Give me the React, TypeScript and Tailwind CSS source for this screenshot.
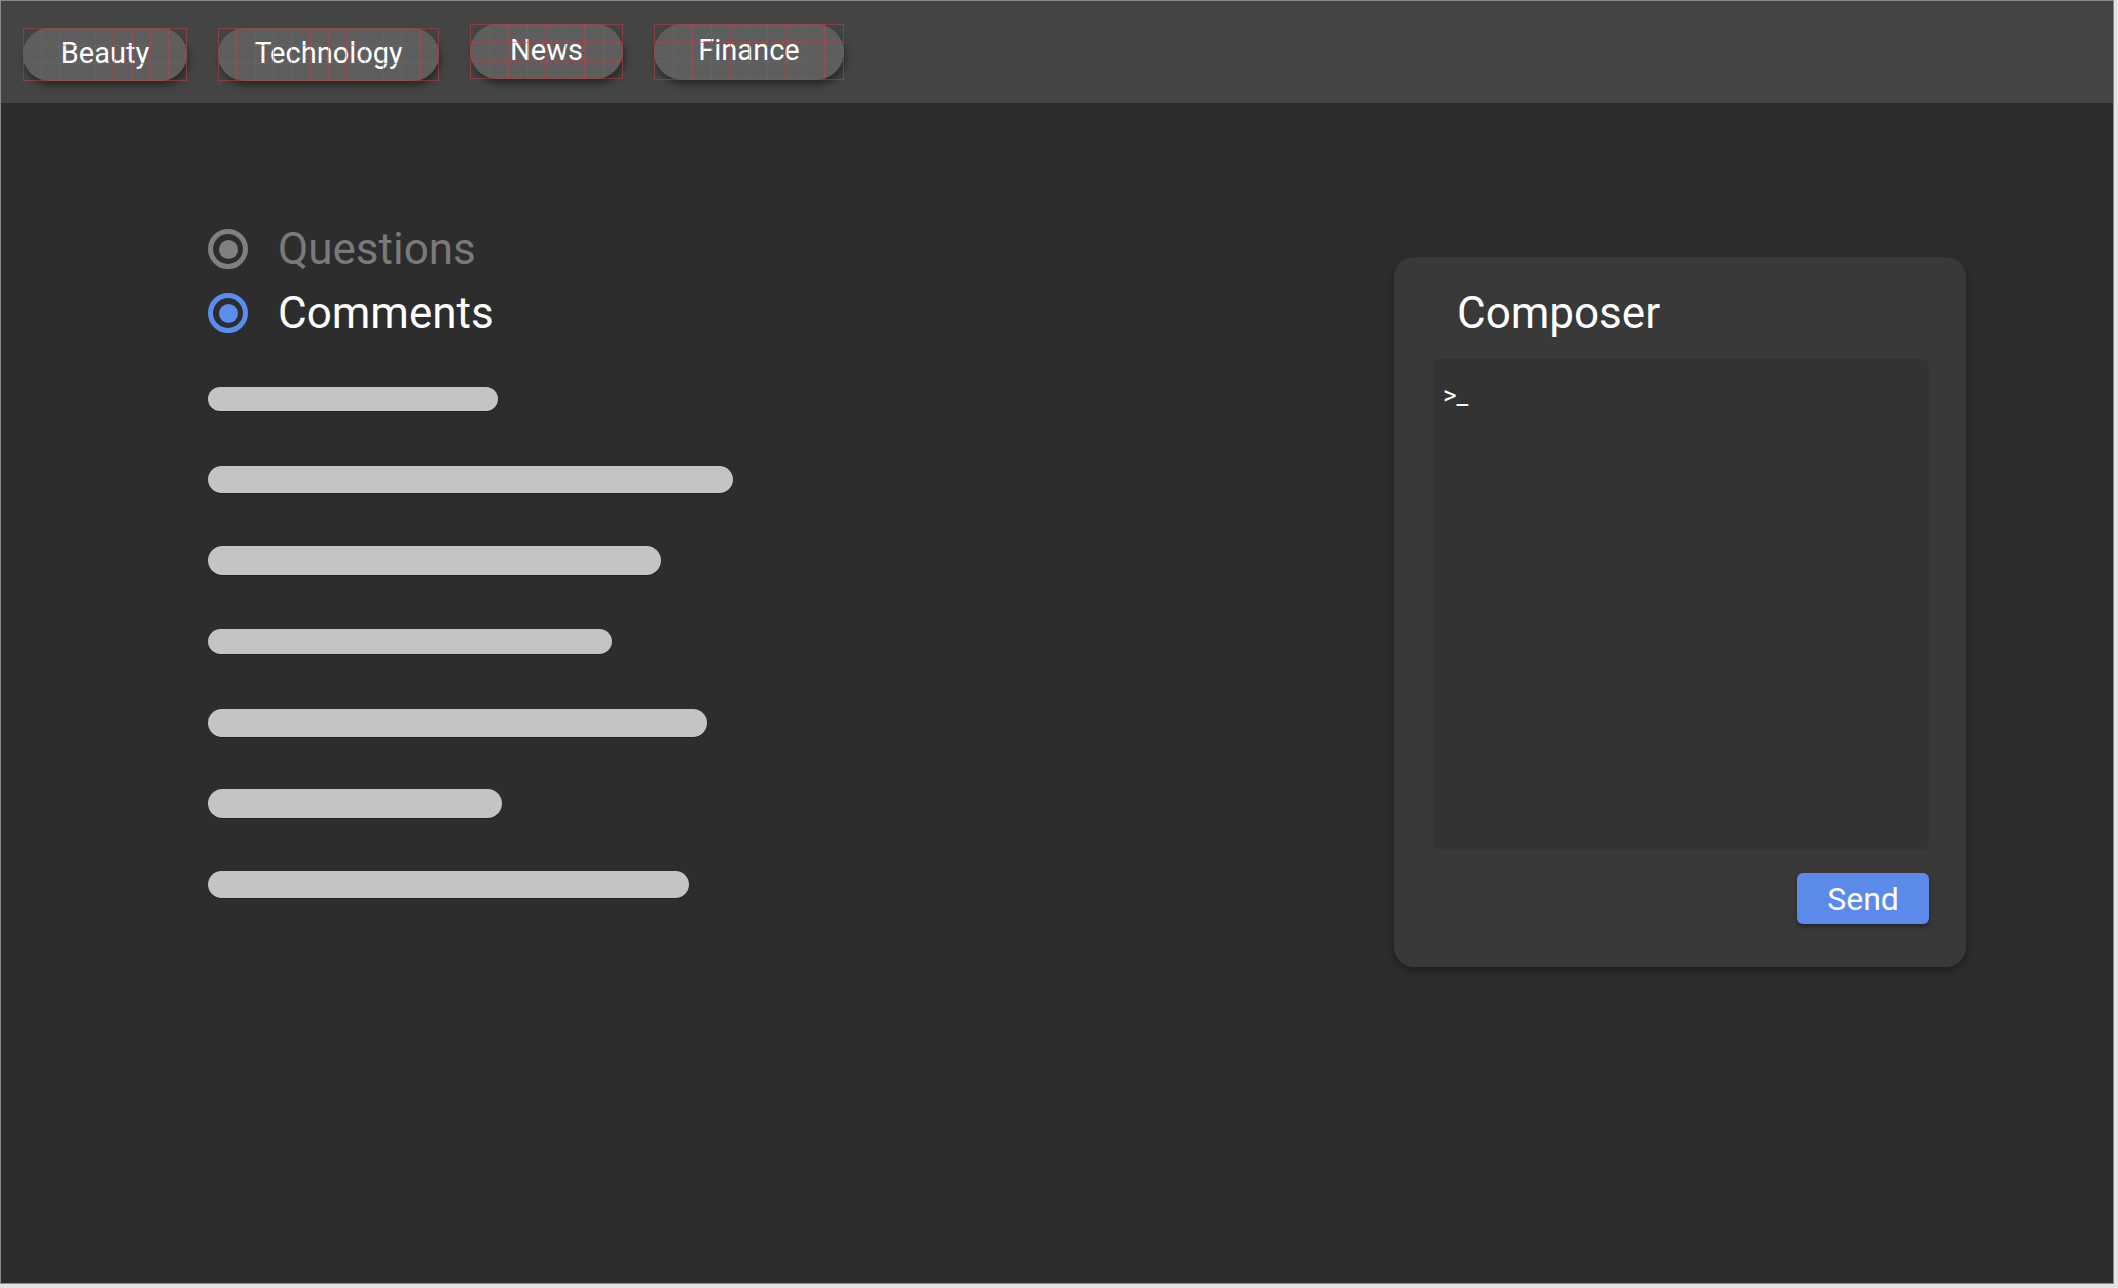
const chips = [
  { label: "Beauty", w: "w-[164px]", h: "h-[53px]", mt: "mt-[27px]", cols: 9 },
  { label: "Technology", w: "w-[221px]", h: "h-[53px]", mt: "mt-[27px]", cols: 12 },
  { label: "News", w: "w-[153px]", h: "h-[55px]", mt: "mt-[23px]", cols: 8 },
  { label: "Finance", w: "w-[190px]", h: "h-[56px]", mt: "mt-[23px]", cols: 10 },
];

const bars = [
  { w: "w-[290px]", h: "h-[24px]" },
  { w: "w-[525px]", h: "h-[27px]" },
  { w: "w-[453px]", h: "h-[29px]" },
  { w: "w-[404px]", h: "h-[25px]" },
  { w: "w-[499px]", h: "h-[28px]" },
  { w: "w-[294px]", h: "h-[29px]" },
  { w: "w-[481px]", h: "h-[27px]" },
];

type ChipProps = { label: string; w: string; h: string; mt: string; cols: number };

function Chip({ label, w, h, mt, cols }: ChipProps) {
  return (
    <div className={`relative ${w} ${h} ${mt}`}>
      <div className="flex h-full w-full items-center justify-center rounded-full bg-[#5e5e5e] text-[29px] leading-none text-white shadow-[2px_5px_7px_rgba(0,0,0,0.4)]">
        <span className="-mt-[3px]">{label}</span>
      </div>
      {/* layout grid overlay */}
      <div className="pointer-events-none absolute inset-0 z-10 flex border-l border-[#c0404880]">
        {Array.from({ length: cols }).map((_, i) => (
          <div key={i} className="h-full flex-1 border-r border-[#c0404880]" />
        ))}
      </div>
      <div className="pointer-events-none absolute inset-0 z-10 flex flex-col border-t border-[#c0404880]">
        {[0, 1, 2].map((i) => (
          <div key={i} className="w-full flex-1 border-b border-[#c0404880]" />
        ))}
      </div>
    </div>
  );
}

function Radio({ label, checked }: { label: string; checked?: boolean }) {
  return (
    <div className="flex h-[64px] items-center gap-[30px]">
      <div
        className={`flex h-[40px] w-[40px] items-center justify-center rounded-full border-[5px] ${
          checked ? "border-[#5b8def]" : "border-[#808080]"
        }`}
      >
        <div className={`h-[19px] w-[19px] rounded-full ${checked ? "bg-[#5b8def]" : "bg-[#808080]"}`} />
      </div>
      <span className={`text-[44px] ${checked ? "text-white" : "text-[#7a7a7a]"}`}>{label}</span>
    </div>
  );
}

export default function App() {
  return (
    <div className="h-[1288px] w-[2118px] overflow-hidden bg-[#e4e4e4] font-['Roboto',sans-serif]">
      <div className="flex h-[1284px] w-[2114px] flex-col border border-[#8a8a8a]">
        <div className="flex h-[102px] shrink-0 items-start gap-[31px] bg-[#454444] pl-[22px]">
          {chips.map((c) => (
            <Chip key={c.label} {...c} />
          ))}
        </div>

        <div className="flex flex-1 bg-[#2d2d2d]">
          <div className="flex-1 pl-[207px] pt-[114px]">
            <Radio label="Questions" />
            <Radio label="Comments" checked />
            <div className="mt-[13px]">
              {bars.map((b, i) => (
                <div key={i} className="flex h-[81px] items-center">
                  <div className={`${b.w} ${b.h} rounded-full bg-[#c4c4c4] shadow-[0_1px_0_rgba(0,0,0,0.25)]`} />
                </div>
              ))}
            </div>
          </div>

          <div className="mr-[147px] mt-[154px] flex h-[710px] w-[572px] flex-col rounded-[20px] bg-[#393939] pl-[39px] pr-[37px] shadow-[0_4px_8px_rgba(0,0,0,0.35)]">
            <h2 className="ml-[24px] mt-[30px] text-[44px] font-normal leading-[52px] text-white">Composer</h2>
            <div className="mt-[20px] h-[491px] rounded-[8px] bg-[#333333] pl-[10px] pt-[17px] text-[26px] text-white">
              &gt;_
            </div>
            <div className="mt-[23px] flex justify-end">
              <button className="flex h-[51px] w-[132px] items-center justify-center rounded-[6px] bg-[#5b8aeb] text-[32px] leading-none text-white shadow-[0_3px_5px_rgba(0,0,0,0.35)]">
                Send
              </button>
            </div>
          </div>
        </div>
      </div>
    </div>
  );
}
